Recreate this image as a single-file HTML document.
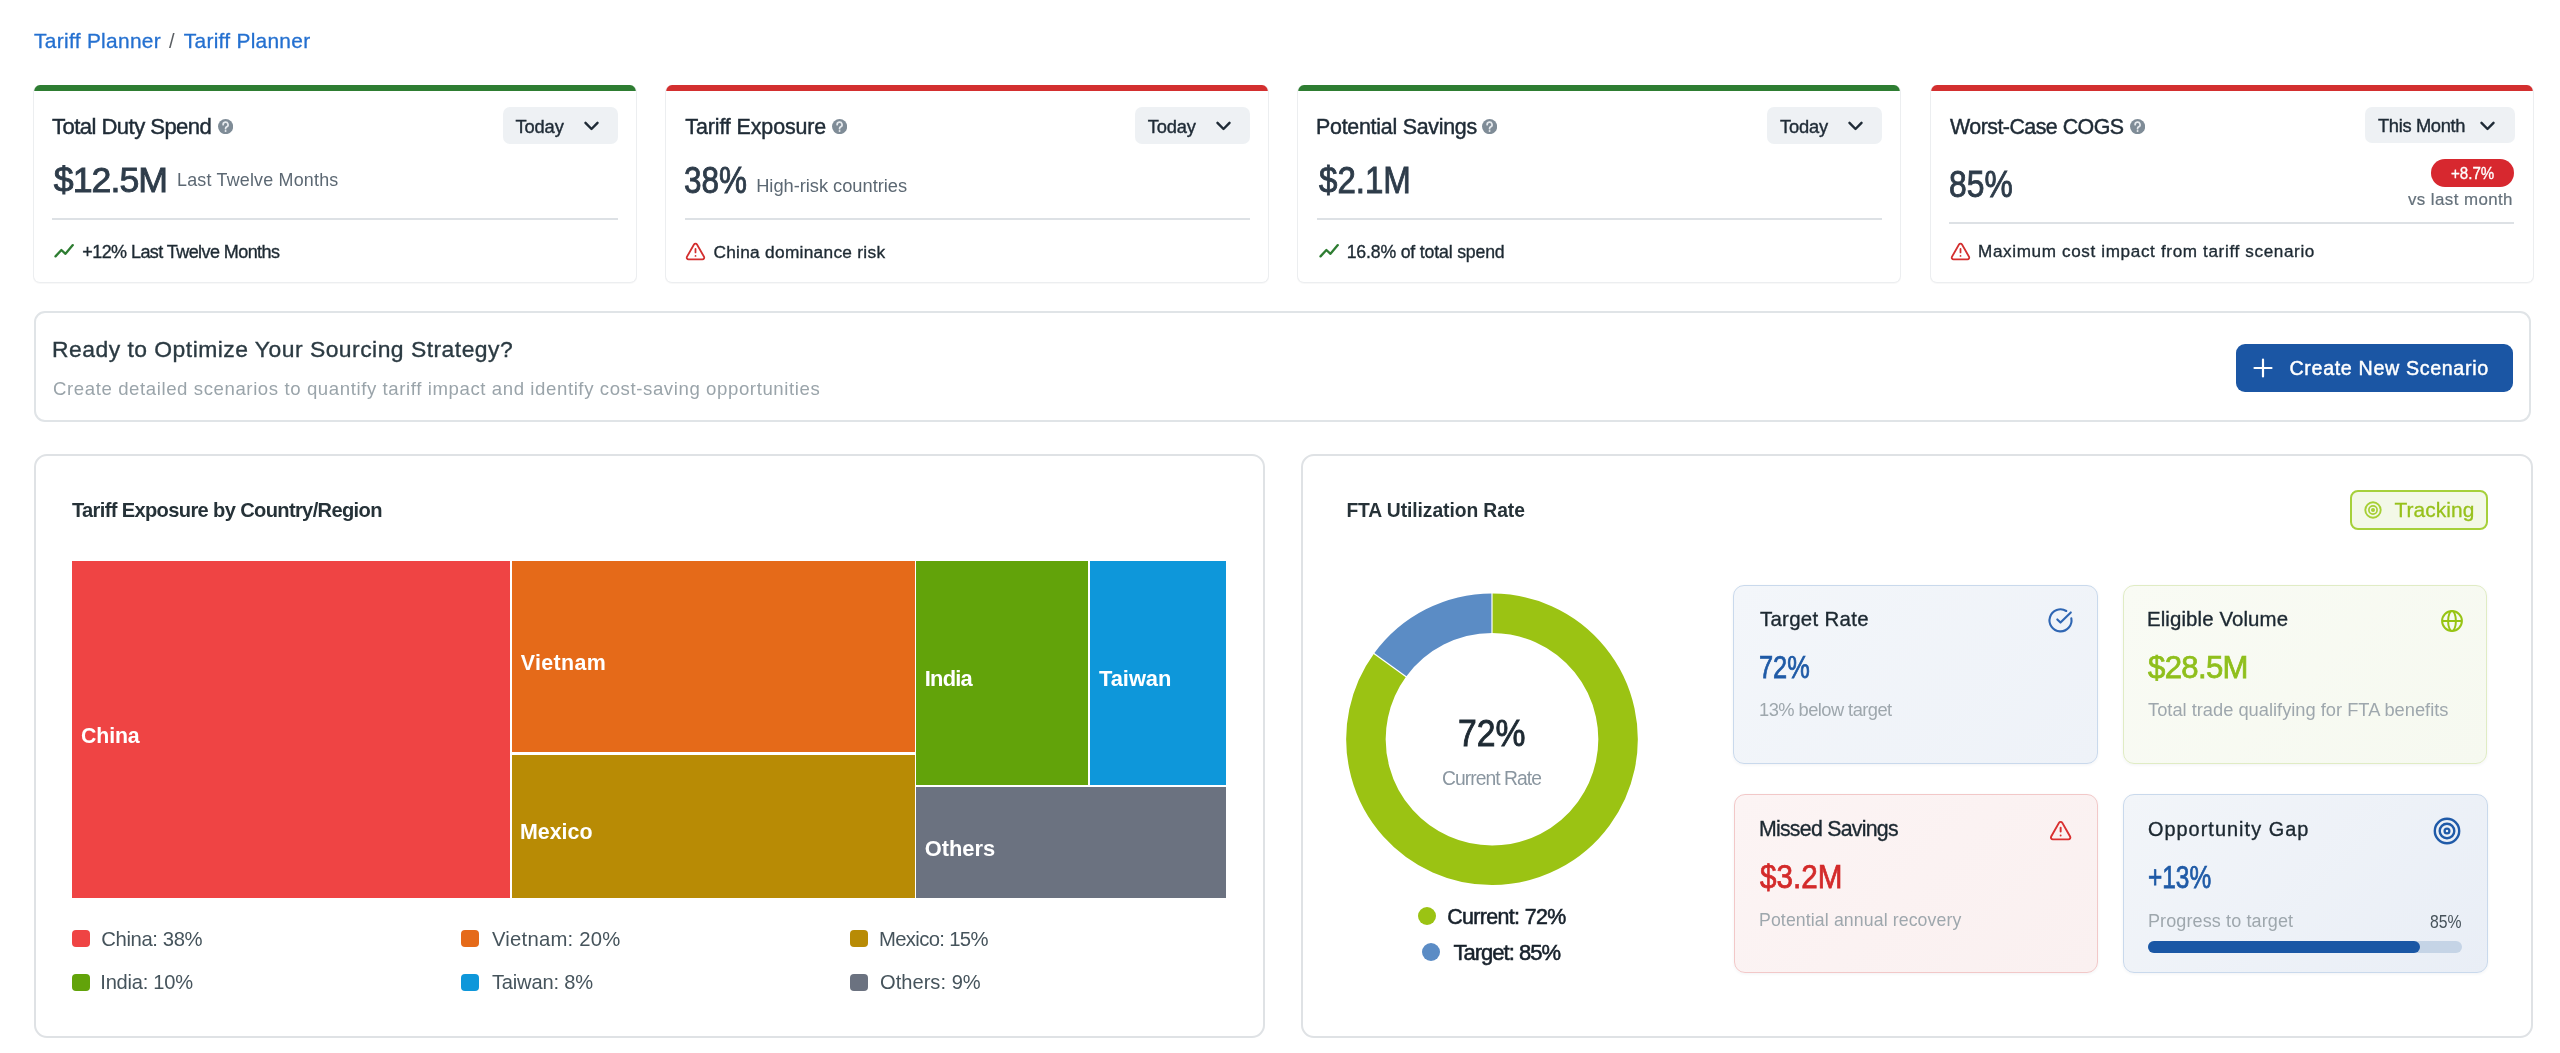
<!DOCTYPE html>
<html><head><meta charset="utf-8"><title>Tariff Planner</title>
<style>
html,body{margin:0;padding:0;background:#ffffff;width:2560px;height:1053px;overflow:hidden;position:relative}
body{font-family:"Liberation Sans",sans-serif}
.t{position:absolute;white-space:nowrap;font-family:"Liberation Sans",sans-serif}
.card{position:absolute;top:84.5px;width:604.2px;height:198.2px;box-sizing:border-box;border:1.2px solid #eceef0;border-top:none;border-radius:7px;background:#fff;box-shadow:0 1px 1px rgba(0,0,0,0.03);overflow:hidden}
.cbar{position:absolute;left:-1px;right:-1px;top:0;height:6.5px}
.help{position:absolute}
svg{position:absolute}
</style></head><body><div id="wrap" style="position:absolute;left:0;top:0;width:2560px;height:1053px;filter:blur(0.4px)">
<div class="card" style="left:32.9px"><div class="cbar" style="background:#2e7d32"></div></div>
<div style="position:absolute;left:52.3px;top:218.25px;width:565.5px;height:1.5px;background:#dde1e5"></div>
<div class="card" style="left:665.1px"><div class="cbar" style="background:#d32f2f"></div></div>
<div style="position:absolute;left:684.5px;top:218.25px;width:565.5px;height:1.5px;background:#dde1e5"></div>
<div class="card" style="left:1297.3px"><div class="cbar" style="background:#2e7d32"></div></div>
<div style="position:absolute;left:1316.7px;top:218.25px;width:565.5px;height:1.5px;background:#dde1e5"></div>
<div class="card" style="left:1929.5px"><div class="cbar" style="background:#d32f2f"></div></div>
<div style="position:absolute;left:1948.9px;top:222.25px;width:565.5px;height:1.5px;background:#dde1e5"></div>
<svg class="help" style="left:217.6px;top:118.5px" width="15.2" height="15.2" viewBox="0 0 16 16"><circle cx="8" cy="8" r="8" fill="#7f8c97"/><path d="M5.4 6a2.6 2.6 0 1 1 3.7 2.3c-.7.35-1.1.75-1.1 1.5v.4" fill="none" stroke="#e6eaee" stroke-width="1.8" stroke-linecap="round"/><circle cx="8" cy="12.6" r="1.05" fill="#e6eaee"/></svg>
<svg class="help" style="left:832.1px;top:118.5px" width="15.2" height="15.2" viewBox="0 0 16 16"><circle cx="8" cy="8" r="8" fill="#7f8c97"/><path d="M5.4 6a2.6 2.6 0 1 1 3.7 2.3c-.7.35-1.1.75-1.1 1.5v.4" fill="none" stroke="#e6eaee" stroke-width="1.8" stroke-linecap="round"/><circle cx="8" cy="12.6" r="1.05" fill="#e6eaee"/></svg>
<svg class="help" style="left:1482.2px;top:118.5px" width="15.2" height="15.2" viewBox="0 0 16 16"><circle cx="8" cy="8" r="8" fill="#7f8c97"/><path d="M5.4 6a2.6 2.6 0 1 1 3.7 2.3c-.7.35-1.1.75-1.1 1.5v.4" fill="none" stroke="#e6eaee" stroke-width="1.8" stroke-linecap="round"/><circle cx="8" cy="12.6" r="1.05" fill="#e6eaee"/></svg>
<svg class="help" style="left:2130.1px;top:118.5px" width="15.2" height="15.2" viewBox="0 0 16 16"><circle cx="8" cy="8" r="8" fill="#7f8c97"/><path d="M5.4 6a2.6 2.6 0 1 1 3.7 2.3c-.7.35-1.1.75-1.1 1.5v.4" fill="none" stroke="#e6eaee" stroke-width="1.8" stroke-linecap="round"/><circle cx="8" cy="12.6" r="1.05" fill="#e6eaee"/></svg>
<div style="position:absolute;left:503.0px;top:107.2px;width:114.8px;height:36.5px;border-radius:7px;background:#eef1f4"></div>
<svg style="position:absolute;left:583.5px;top:121px" width="15" height="10" viewBox="0 0 15 10"><polyline points="1.5,1.8 7.5,8 13.5,1.8" fill="none" stroke="#1f2b36" stroke-width="2.4" stroke-linecap="round" stroke-linejoin="round"/></svg>
<div style="position:absolute;left:1135.2px;top:107.2px;width:114.8px;height:36.5px;border-radius:7px;background:#eef1f4"></div>
<svg style="position:absolute;left:1215.7px;top:121px" width="15" height="10" viewBox="0 0 15 10"><polyline points="1.5,1.8 7.5,8 13.5,1.8" fill="none" stroke="#1f2b36" stroke-width="2.4" stroke-linecap="round" stroke-linejoin="round"/></svg>
<div style="position:absolute;left:1767.4px;top:107.2px;width:114.8px;height:36.5px;border-radius:7px;background:#eef1f4"></div>
<svg style="position:absolute;left:1847.9px;top:121px" width="15" height="10" viewBox="0 0 15 10"><polyline points="1.5,1.8 7.5,8 13.5,1.8" fill="none" stroke="#1f2b36" stroke-width="2.4" stroke-linecap="round" stroke-linejoin="round"/></svg>
<div style="position:absolute;left:2365px;top:107.2px;width:149.7px;height:36.3px;border-radius:7px;background:#eef1f4"></div>
<svg style="position:absolute;left:2480.3px;top:121.2px" width="15" height="10" viewBox="0 0 15 10"><polyline points="1.5,1.8 7.5,8 13.5,1.8" fill="none" stroke="#1f2b36" stroke-width="2.4" stroke-linecap="round" stroke-linejoin="round"/></svg>
<div style="position:absolute;left:2431.4px;top:158.5px;width:82.6px;height:28.2px;border-radius:14.1px;background:#d7282f"></div>
<svg style="position:absolute;left:54px;top:243px" width="21" height="16" viewBox="0 0 21 16"><polyline points="1.5,13.4 7.4,7 11.5,10.8 18.8,2.1" fill="none" stroke="#2e7d32" stroke-width="2.3" stroke-linecap="round" stroke-linejoin="round"/></svg>
<svg style="position:absolute;left:1319px;top:243px" width="21" height="16" viewBox="0 0 21 16"><polyline points="1.5,13.4 7.4,7 11.5,10.8 18.8,2.1" fill="none" stroke="#2e7d32" stroke-width="2.3" stroke-linecap="round" stroke-linejoin="round"/></svg>
<svg style="position:absolute;left:685.2px;top:241.0px" width="21" height="21" viewBox="0 0 24 24" fill="none" stroke="#d32f2f" stroke-width="2" stroke-linecap="round" stroke-linejoin="round"><path d="m21.73 18-8-14a2 2 0 0 0-3.48 0l-8 14A2 2 0 0 0 4 21h16a2 2 0 0 0 1.73-3Z"/><path d="M12 9v4"/><path d="M12 17h.01"/></svg>
<svg style="position:absolute;left:1950.1px;top:241.0px" width="21" height="21" viewBox="0 0 24 24" fill="none" stroke="#d32f2f" stroke-width="2" stroke-linecap="round" stroke-linejoin="round"><path d="m21.73 18-8-14a2 2 0 0 0-3.48 0l-8 14A2 2 0 0 0 4 21h16a2 2 0 0 0 1.73-3Z"/><path d="M12 9v4"/><path d="M12 17h.01"/></svg>
<div style="position:absolute;left:33.6px;top:311.1px;width:2497.7px;height:111.1px;box-sizing:border-box;border:2px solid #e0e4e7;border-radius:11px;background:#fff"></div>
<div style="position:absolute;left:2235.7px;top:343.5px;width:277.6px;height:48px;border-radius:9px;background:#1b56a4"></div>
<svg style="position:absolute;left:2253px;top:358px" width="20" height="20" viewBox="0 0 20 20"><path d="M10 1.5V18.5M1.5 10H18.5" stroke="#fff" stroke-width="2.2" stroke-linecap="round"/></svg>
<div style="position:absolute;left:33.5px;top:453.8px;width:1231.9px;height:584.4px;box-sizing:border-box;border:2px solid #dfe2e5;border-radius:13px;background:#fff"></div>
<div style="position:absolute;left:1300.9px;top:453.8px;width:1232px;height:584.4px;box-sizing:border-box;border:2px solid #dfe2e5;border-radius:13px;background:#fff"></div>
<div style="position:absolute;left:71.8px;top:561.1px;width:437.8px;height:336.6px;background:#ef4444"></div>
<div style="position:absolute;left:511.8px;top:561.1px;width:402.8px;height:191.0px;background:#e56a19"></div>
<div style="position:absolute;left:511.8px;top:754.5px;width:402.8px;height:143.2px;background:#b88b05"></div>
<div style="position:absolute;left:916.2px;top:561.1px;width:171.8px;height:223.7px;background:#62a30a"></div>
<div style="position:absolute;left:1089.6px;top:561.1px;width:136.9px;height:223.7px;background:#0e97da"></div>
<div style="position:absolute;left:916.2px;top:786.7px;width:310.3px;height:111.0px;background:#6b7280"></div>
<div style="position:absolute;left:71.5px;top:929.9px;width:18px;height:17.5px;border-radius:4px;background:#ef4444"></div>
<div style="position:absolute;left:460.8px;top:929.9px;width:18px;height:17.5px;border-radius:4px;background:#e56a19"></div>
<div style="position:absolute;left:850.1px;top:929.9px;width:18px;height:17.5px;border-radius:4px;background:#b88b05"></div>
<div style="position:absolute;left:71.5px;top:973.7px;width:18px;height:17.5px;border-radius:4px;background:#62a30a"></div>
<div style="position:absolute;left:460.8px;top:973.7px;width:18px;height:17.5px;border-radius:4px;background:#0e97da"></div>
<div style="position:absolute;left:850.1px;top:973.7px;width:18px;height:17.5px;border-radius:4px;background:#6b7280"></div>
<div style="position:absolute;left:2350.2px;top:490.2px;width:137.5px;height:39.5px;box-sizing:border-box;border:2px solid #a6d03a;border-radius:8px;background:#f3f8e7"></div>
<svg style="position:absolute;left:2362.6px;top:500px" width="20" height="20" viewBox="0 0 20 20"><circle cx="10" cy="10" r="7.7" fill="none" stroke="#a6cf35" stroke-width="1.9"/><circle cx="10" cy="10" r="4.1" fill="none" stroke="#a6cf35" stroke-width="1.7"/><circle cx="10" cy="10" r="2" fill="#a6cf35"/></svg>
<svg style="position:absolute;left:0;top:0" width="2560" height="1053"><path d="M1492,613.1500000000001 A126.05000000000001,126.05000000000001 0 1 1 1390.02,665.11" fill="none" stroke="#9bc313" stroke-width="39.500000000000014"/><path d="M1390.02,665.11 A126.05000000000001,126.05000000000001 0 0 1 1492,613.1500000000001" fill="none" stroke="#5b8cc5" stroke-width="39.500000000000014"/><line x1="1492" y1="592.4000000000001" x2="1492" y2="633.9000000000001" stroke="#fff" stroke-width="1.2"/><line x1="1373.24" y1="652.91" x2="1406.81" y2="677.31" stroke="#fff" stroke-width="1.2"/></svg>
<div style="position:absolute;left:1417.5px;top:907.1px;width:18.4px;height:18.4px;border-radius:50%;background:#9bc313"></div>
<div style="position:absolute;left:1421.8px;top:942.6px;width:18.4px;height:18.4px;border-radius:50%;background:#5b8cc5"></div>
<div style="position:absolute;left:1733.3px;top:584.9px;width:364.5px;height:179px;box-sizing:border-box;border:1.5px solid #c9d9ec;border-radius:11px;background:linear-gradient(135deg,#f3f6fa,#eef2f8);box-shadow:0 1px 3px rgba(30,50,80,0.06)"></div>
<div style="position:absolute;left:2122.9px;top:584.9px;width:364.5px;height:179px;box-sizing:border-box;border:1.5px solid #e0ecc4;border-radius:11px;background:linear-gradient(135deg,#f9fbf4,#f6f9f0);box-shadow:0 1px 3px rgba(30,50,80,0.06)"></div>
<div style="position:absolute;left:1733.5px;top:794.4px;width:364.5px;height:179px;box-sizing:border-box;border:1.5px solid #f2c8c8;border-radius:11px;background:linear-gradient(135deg,#fcf4f4,#faf0f0);box-shadow:0 1px 3px rgba(30,50,80,0.06)"></div>
<div style="position:absolute;left:2123px;top:794.4px;width:364.5px;height:179px;box-sizing:border-box;border:1.5px solid #c9d9ec;border-radius:11px;background:linear-gradient(135deg,#f2f5f9,#e9eef6);box-shadow:0 1px 3px rgba(30,50,80,0.06)"></div>
<svg style="position:absolute;left:2046px;top:606px" width="30" height="30" viewBox="0 0 30 30"><path d="M25.3 12.2A11 11 0 1 1 20.3 5.0" fill="none" stroke="#2f66b3" stroke-width="2.1" stroke-linecap="round"/><polyline points="11.3,13.4 14.5,16.6 24.8,6.4" fill="none" stroke="#2f66b3" stroke-width="2.1" stroke-linecap="round" stroke-linejoin="round"/></svg>
<svg style="position:absolute;left:2440.3px;top:608.5px" width="24" height="24" viewBox="0 0 24 24"><circle cx="12" cy="12" r="9.9" fill="none" stroke="#97c414" stroke-width="2"/><ellipse cx="12" cy="12" rx="3.9" ry="9.9" fill="none" stroke="#97c414" stroke-width="2"/><line x1="2" y1="12" x2="22" y2="12" stroke="#97c414" stroke-width="2"/></svg>
<svg style="position:absolute;left:2048.9px;top:819.1px" width="23.3" height="23.3" viewBox="0 0 24 24" fill="none" stroke="#d93030" stroke-width="2" stroke-linecap="round" stroke-linejoin="round"><path d="m21.73 18-8-14a2 2 0 0 0-3.48 0l-8 14A2 2 0 0 0 4 21h16a2 2 0 0 0 1.73-3Z"/><path d="M12 9v4"/><path d="M12 17h.01"/></svg>
<svg style="position:absolute;left:2431.8px;top:815.5px" width="30" height="30" viewBox="0 0 30 30"><circle cx="15" cy="15" r="12.2" fill="none" stroke="#1f5aa8" stroke-width="2.4"/><circle cx="15" cy="15" r="7.3" fill="none" stroke="#1f5aa8" stroke-width="2.4"/><circle cx="15" cy="15" r="2.4" fill="none" stroke="#1f5aa8" stroke-width="2.3"/></svg>
<div style="position:absolute;left:2147.9px;top:940.5px;width:314.1px;height:12px;border-radius:6px;background:#c5d4e6"></div>
<div style="position:absolute;left:2147.9px;top:940.5px;width:272.2px;height:12px;border-radius:6px;background:#1a57a5"></div>
<div class="t" style="left:34.1px;top:31.4px;font-size:20.9px;line-height:20.9px;font-weight:400;color:#2470d0;letter-spacing:0.3px;-webkit-text-stroke:0.3px #2470d0;">Tariff Planner</div>
<div class="t" style="left:169.0px;top:31.4px;font-size:20px;line-height:20px;font-weight:400;color:#5b5f63;letter-spacing:0px;">/</div>
<div class="t" style="left:183.8px;top:31.4px;font-size:20.9px;line-height:20.9px;font-weight:400;color:#2470d0;letter-spacing:0.277px;-webkit-text-stroke:0.3px #2470d0;">Tariff Planner</div>
<div class="t" style="left:52.0px;top:115.5px;font-size:22.1px;line-height:22.1px;font-weight:400;color:#1f2b36;letter-spacing:-0.56px;-webkit-text-stroke:0.45px #1f2b36;">Total Duty Spend</div>
<div class="t" style="left:685.3px;top:116.6px;font-size:21.4px;line-height:21.4px;font-weight:400;color:#1f2b36;letter-spacing:-0.093px;-webkit-text-stroke:0.45px #1f2b36;">Tariff Exposure</div>
<div class="t" style="left:1316.0px;top:116.5px;font-size:21.4px;line-height:21.4px;font-weight:400;color:#1f2b36;letter-spacing:-0.256px;-webkit-text-stroke:0.45px #1f2b36;">Potential Savings</div>
<div class="t" style="left:1950.0px;top:116.5px;font-size:21.4px;line-height:21.4px;font-weight:400;color:#1f2b36;letter-spacing:-0.529px;-webkit-text-stroke:0.45px #1f2b36;">Worst-Case COGS</div>
<div class="t" style="left:515.6px;top:117.5px;font-size:18.3px;line-height:18.3px;font-weight:400;color:#1f2b36;letter-spacing:-0.15px;-webkit-text-stroke:0.4px #1f2b36;">Today</div>
<div class="t" style="left:1147.8px;top:117.5px;font-size:18.3px;line-height:18.3px;font-weight:400;color:#1f2b36;letter-spacing:-0.15px;-webkit-text-stroke:0.4px #1f2b36;">Today</div>
<div class="t" style="left:1780.0px;top:117.5px;font-size:18.3px;line-height:18.3px;font-weight:400;color:#1f2b36;letter-spacing:-0.15px;-webkit-text-stroke:0.4px #1f2b36;">Today</div>
<div class="t" style="left:2378.0px;top:117.2px;font-size:18.3px;line-height:18.3px;font-weight:400;color:#1f2b36;letter-spacing:-0.333px;-webkit-text-stroke:0.4px #1f2b36;">This Month</div>
<div class="t" style="left:53.75px;top:163.0px;font-size:35.7px;line-height:35.7px;font-weight:400;color:#2e3c4a;letter-spacing:-0.95px;-webkit-text-stroke:0.9px #2e3c4a;">$12.5M</div>
<div class="t" style="left:177.0px;top:172.25px;font-size:17.9px;line-height:17.9px;font-weight:400;color:#5c6873;letter-spacing:0.206px;">Last Twelve Months</div>
<div class="t" style="left:684.45px;top:162.7px;font-size:36.9px;line-height:36.9px;font-weight:400;color:#2e3c4a;letter-spacing:0px;-webkit-text-stroke:0.9px #2e3c4a;transform:scaleX(0.8528);transform-origin:0 0;">38%</div>
<div class="t" style="left:756.2px;top:177.0px;font-size:18.3px;line-height:18.3px;font-weight:400;color:#5c6873;letter-spacing:-0.028px;">High-risk countries</div>
<div class="t" style="left:1318.6px;top:162.7px;font-size:36.9px;line-height:36.9px;font-weight:400;color:#2e3c4a;letter-spacing:0px;-webkit-text-stroke:0.9px #2e3c4a;transform:scaleX(0.896);transform-origin:0 0;">$2.1M</div>
<div class="t" style="left:1948.54px;top:166.6px;font-size:36.9px;line-height:36.9px;font-weight:400;color:#2e3c4a;letter-spacing:0px;-webkit-text-stroke:0.9px #2e3c4a;transform:scaleX(0.8625);transform-origin:0 0;">85%</div>
<div class="t" style="left:2450.6px;top:165.0px;font-size:17.4px;line-height:17.4px;font-weight:400;color:#ffffff;letter-spacing:0px;-webkit-text-stroke:0.35px #ffffff;transform:scaleX(0.868);transform-origin:0 0;">+8.7%</div>
<div class="t" style="left:2408.0px;top:192.3px;font-size:16.9px;line-height:16.9px;font-weight:400;color:#65717b;letter-spacing:0.417px;-webkit-text-stroke:0.2px #65717b;">vs last month</div>
<div class="t" style="left:82.3px;top:242.8px;font-size:18.0px;line-height:18.0px;font-weight:400;color:#1e2a33;letter-spacing:-0.573px;-webkit-text-stroke:0.35px #1e2a33;">+12% Last Twelve Months</div>
<div class="t" style="left:713.4px;top:243.5px;font-size:17.3px;line-height:17.3px;font-weight:400;color:#1e2a33;letter-spacing:0.289px;-webkit-text-stroke:0.35px #1e2a33;">China dominance risk</div>
<div class="t" style="left:1346.7px;top:243.7px;font-size:17.7px;line-height:17.7px;font-weight:400;color:#1e2a33;letter-spacing:-0.174px;-webkit-text-stroke:0.35px #1e2a33;">16.8% of total spend</div>
<div class="t" style="left:1978.0px;top:243.3px;font-size:17.1px;line-height:17.1px;font-weight:400;color:#1e2a33;letter-spacing:0.644px;-webkit-text-stroke:0.35px #1e2a33;">Maximum cost impact from tariff scenario</div>
<div class="t" style="left:52.0px;top:338.4px;font-size:22.9px;line-height:22.9px;font-weight:400;color:#2b3a42;letter-spacing:0.48px;-webkit-text-stroke:0.35px #2b3a42;">Ready to Optimize Your Sourcing Strategy?</div>
<div class="t" style="left:53.0px;top:380.0px;font-size:18.6px;line-height:18.6px;font-weight:400;color:#9aa4aa;letter-spacing:0.594px;">Create detailed scenarios to quantify tariff impact and identify cost-saving opportunities</div>
<div class="t" style="left:2289.5px;top:358.8px;font-size:19.7px;line-height:19.7px;font-weight:400;color:#ffffff;letter-spacing:0.639px;-webkit-text-stroke:0.45px #ffffff;">Create New Scenario</div>
<div class="t" style="left:71.9px;top:499.9px;font-size:20.1px;line-height:20.1px;font-weight:700;color:#263238;letter-spacing:-0.645px;">Tariff Exposure by Country/Region</div>
<div class="t" style="left:81.0px;top:725.6px;font-size:21.3px;line-height:21.3px;font-weight:700;color:#ffffff;letter-spacing:-0.125px;">China</div>
<div class="t" style="left:520.8px;top:652.9px;font-size:21.4px;line-height:21.4px;font-weight:700;color:#ffffff;letter-spacing:0.35px;">Vietnam</div>
<div class="t" style="left:520.0px;top:822.4px;font-size:21.4px;line-height:21.4px;font-weight:700;color:#ffffff;letter-spacing:0px;">Mexico</div>
<div class="t" style="left:924.7px;top:668.2px;font-size:21.9px;line-height:21.9px;font-weight:700;color:#ffffff;letter-spacing:-0.75px;">India</div>
<div class="t" style="left:1099.0px;top:668.2px;font-size:21.9px;line-height:21.9px;font-weight:700;color:#ffffff;letter-spacing:-0.04px;">Taiwan</div>
<div class="t" style="left:924.7px;top:837.6px;font-size:21.9px;line-height:21.9px;font-weight:700;color:#ffffff;letter-spacing:-0.02px;">Others</div>
<div class="t" style="left:101.3px;top:928.6px;font-size:20.3px;line-height:20.3px;font-weight:400;color:#46545c;letter-spacing:-0.4px;">China: 38%</div>
<div class="t" style="left:492.0px;top:928.6px;font-size:20.3px;line-height:20.3px;font-weight:400;color:#46545c;letter-spacing:0.209px;">Vietnam: 20%</div>
<div class="t" style="left:879.0px;top:928.6px;font-size:20.3px;line-height:20.3px;font-weight:400;color:#46545c;letter-spacing:-0.66px;">Mexico: 15%</div>
<div class="t" style="left:100.3px;top:972.1px;font-size:20.1px;line-height:20.1px;font-weight:400;color:#46545c;letter-spacing:-0.244px;">India: 10%</div>
<div class="t" style="left:492.0px;top:972.1px;font-size:20.1px;line-height:20.1px;font-weight:400;color:#46545c;letter-spacing:-0.189px;">Taiwan: 8%</div>
<div class="t" style="left:880.0px;top:972.1px;font-size:20.1px;line-height:20.1px;font-weight:400;color:#46545c;letter-spacing:0.022px;">Others: 9%</div>
<div class="t" style="left:1346.4px;top:500.5px;font-size:19.3px;line-height:19.3px;font-weight:700;color:#263238;letter-spacing:-0.074px;">FTA Utilization Rate</div>
<div class="t" style="left:2394.5px;top:500.3px;font-size:20.9px;line-height:20.9px;font-weight:400;color:#97c11c;letter-spacing:0.071px;-webkit-text-stroke:0.3px #97c11c;">Tracking</div>
<div class="t" style="left:1458.11px;top:714.75px;font-size:37.8px;line-height:37.8px;font-weight:400;color:#1e2a33;letter-spacing:0px;-webkit-text-stroke:0.9px #1e2a33;transform:scaleX(0.8905);transform-origin:0 0;">72%</div>
<div class="t" style="left:1441.9px;top:768.8px;font-size:19.3px;line-height:19.3px;font-weight:400;color:#8a96a0;letter-spacing:-0.936px;">Current Rate</div>
<div class="t" style="left:1447.3px;top:907.2px;font-size:21.4px;line-height:21.4px;font-weight:400;color:#17212b;letter-spacing:-0.645px;-webkit-text-stroke:0.55px #17212b;">Current: 72%</div>
<div class="t" style="left:1453.4px;top:941.7px;font-size:22.0px;line-height:22.0px;font-weight:400;color:#17212b;letter-spacing:-0.97px;-webkit-text-stroke:0.55px #17212b;">Target: 85%</div>
<div class="t" style="left:1759.9px;top:609.3px;font-size:20.4px;line-height:20.4px;font-weight:400;color:#1c2831;letter-spacing:0.32px;-webkit-text-stroke:0.35px #1c2831;">Target Rate</div>
<div class="t" style="left:1758.68px;top:651.5px;font-size:31.1px;line-height:31.1px;font-weight:400;color:#1f5aa6;letter-spacing:0px;-webkit-text-stroke:0.75px #1f5aa6;transform:scaleX(0.8164);transform-origin:0 0;">72%</div>
<div class="t" style="left:1759.0px;top:701.0px;font-size:18.3px;line-height:18.3px;font-weight:400;color:#9ea7ad;letter-spacing:-0.54px;">13% below target</div>
<div class="t" style="left:2147.0px;top:609.3px;font-size:20.4px;line-height:20.4px;font-weight:400;color:#1c2831;letter-spacing:0.114px;-webkit-text-stroke:0.35px #1c2831;">Eligible Volume</div>
<div class="t" style="left:2148.0px;top:651.5px;font-size:31.1px;line-height:31.1px;font-weight:400;color:#8fbf1c;letter-spacing:-0.64px;-webkit-text-stroke:0.75px #8fbf1c;">$28.5M</div>
<div class="t" style="left:2148.0px;top:701.0px;font-size:18.3px;line-height:18.3px;font-weight:400;color:#9ea7ad;letter-spacing:0.0px;">Total trade qualifying for FTA benefits</div>
<div class="t" style="left:1758.9px;top:818.8px;font-size:21.3px;line-height:21.3px;font-weight:400;color:#1c2831;letter-spacing:-0.723px;-webkit-text-stroke:0.35px #1c2831;">Missed Savings</div>
<div class="t" style="left:1760.0px;top:860.7px;font-size:32.7px;line-height:32.7px;font-weight:400;color:#d32a2a;letter-spacing:0px;-webkit-text-stroke:0.75px #d32a2a;transform:scaleX(0.9067);transform-origin:0 0;">$3.2M</div>
<div class="t" style="left:1759.0px;top:911.6px;font-size:17.7px;line-height:17.7px;font-weight:400;color:#9ea7ad;letter-spacing:0.113px;">Potential annual recovery</div>
<div class="t" style="left:2147.9px;top:819.8px;font-size:19.9px;line-height:19.9px;font-weight:400;color:#1c2831;letter-spacing:1.036px;-webkit-text-stroke:0.35px #1c2831;">Opportunity Gap</div>
<div class="t" style="left:2148.22px;top:861.7px;font-size:31.3px;line-height:31.3px;font-weight:400;color:#1f5aa6;letter-spacing:0px;-webkit-text-stroke:0.75px #1f5aa6;transform:scaleX(0.781);transform-origin:0 0;">+13%</div>
<div class="t" style="left:2148.0px;top:911.6px;font-size:18.0px;line-height:18.0px;font-weight:400;color:#9ea7ad;letter-spacing:0.118px;">Progress to target</div>
<div class="t" style="left:2429.81px;top:914.0px;font-size:17.7px;line-height:17.7px;font-weight:400;color:#46525a;letter-spacing:0px;transform:scaleX(0.8912);transform-origin:0 0;">85%</div>
</div></body></html>
